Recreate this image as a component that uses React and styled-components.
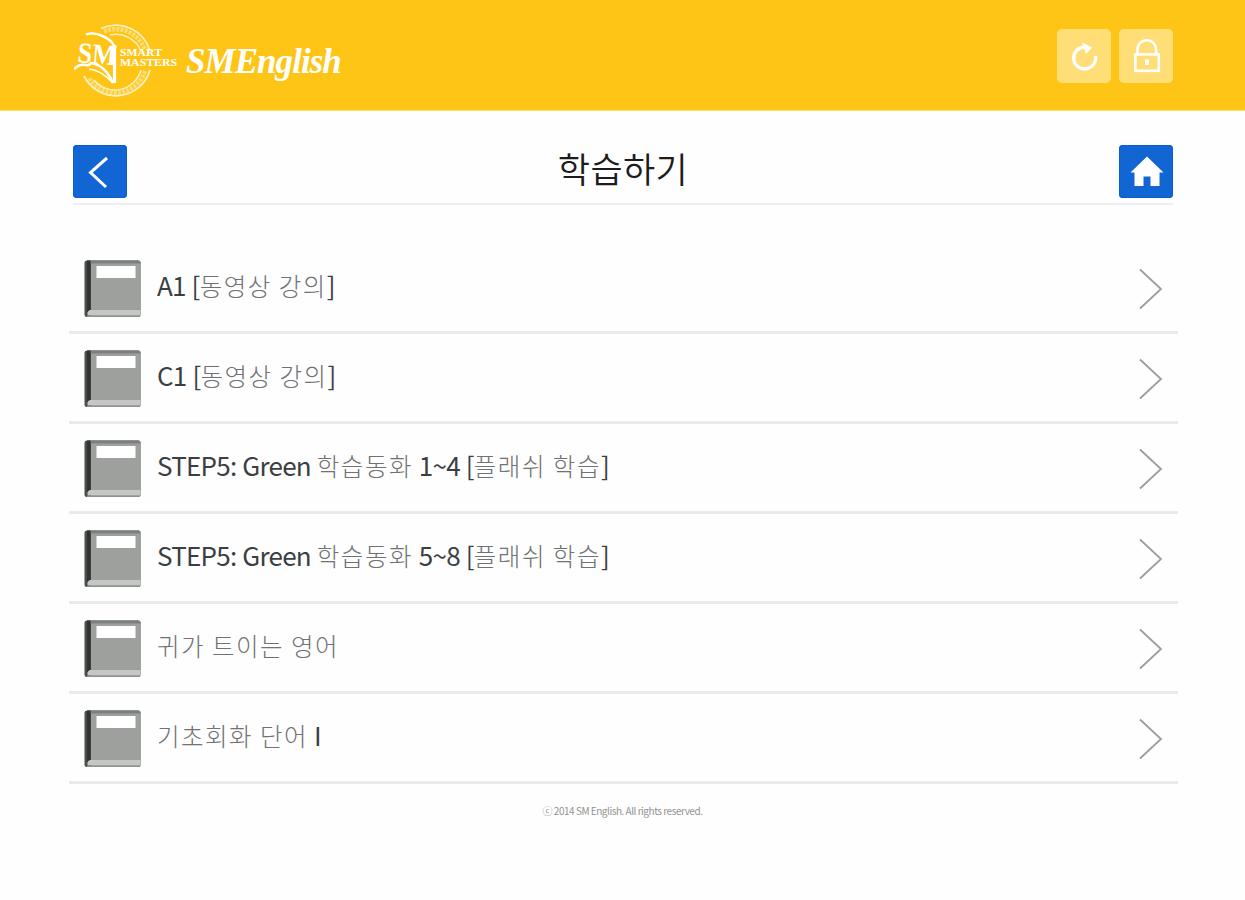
import React from "react";
import styled, { createGlobalStyle } from "styled-components";

const colors = {
  header: "#ffc516",
  headerButton: "#ffde78",
  blue: "#1266d4",
  blueEdge: "#0f5bcb",
  line: "#e9ebe9",
  text: "#3c3f42",
  hangul: "#6f7173",
};

const lessons = [
  "A1 [동영상 강의]",
  "C1 [동영상 강의]",
  "STEP5: Green 학습동화 1~4 [플래쉬 학습]",
  "STEP5: Green 학습동화 5~8 [플래쉬 학습]",
  "귀가 트이는 영어",
  "기초회화 단어 I",
];

// Korean words are set lighter than the latin text around them
const hangulWords = /([가-힣]+(?: [가-힣]+)*)/;

const App = () => {
  return (
    <Wrapper>
      <GlobalStyle />
      <Header>
        <Brand>
          <Emblem />
          <BrandName>SMEnglish</BrandName>
        </Brand>
        <Actions>
          <HeaderButton aria-label="새로고침">
            <RefreshIcon />
          </HeaderButton>
          <HeaderButton aria-label="로그인">
            <LockIcon />
          </HeaderButton>
        </Actions>
      </Header>

      <TitleBar>
        <NavButton aria-label="뒤로">
          <BackIcon />
        </NavButton>
        <Title>학습하기</Title>
        <NavButton aria-label="홈">
          <HomeIcon />
        </NavButton>
      </TitleBar>

      <List>
        {lessons.map((lesson) => (
          <Row key={lesson}>
            <BookIcon />
            <Label>
              {lesson.split(hangulWords).map((part, i) => (i % 2 ? <Hangul key={i}>{part}</Hangul> : part))}
            </Label>
            <ArrowIcon />
          </Row>
        ))}
      </List>

      <Footer>ⓒ 2014 SM English. All rights reserved.</Footer>
    </Wrapper>
  );
};

const Emblem = () => (
  <svg width="104" height="76" viewBox="0 0 104 76" fill="none" stroke="#fff">
    <g opacity="0.75">
      <path d="M27 5.500A35.500 35.500 0 0 1 76 28M76 47A35.500 35.500 0 0 1 10 53" strokeWidth="1.800" />
      <path d="M36 12A27 27 0 0 1 67 28M67 47A27 27 0 0 1 20 57" strokeWidth="1.500" />
      <path d="M30 8.500A31 31 0 0 1 71 27M71 48A31 31 0 0 1 15 55" strokeWidth="4.500" strokeDasharray="3 1.200" opacity="0.55" />
    </g>
    <path d="M12 11.500q7-2.500 14 .5q11 4 14 11" strokeWidth="2.400" />
    <path d="M40.500 22v38" strokeWidth="3.200" />
    <path d="M0 46.500q5-6 12-4.500q3 1 5-2q14 2 22 20" strokeWidth="2.600" />
    <path d="M15 46q12 1 24 14" strokeWidth="1.400" />
    <EmblemText x="3" y="39" fontSize="29" textLength="39" lengthAdjust="spacingAndGlyphs" transform="rotate(5 3 39)">
      SM
    </EmblemText>
    <EmblemText x="46" y="33" fontSize="10" textLength="42" lengthAdjust="spacingAndGlyphs">
      SMART
    </EmblemText>
    <EmblemText x="46" y="43" fontSize="10" textLength="57" lengthAdjust="spacingAndGlyphs">
      MASTERS
    </EmblemText>
  </svg>
);

const RefreshIcon = () => (
  <svg width="54" height="54" viewBox="0 0 54 54" fill="none" stroke="#fff">
    <path d="M27 18A11 11 0 1 0 38.500 27" strokeWidth="3.300" />
    <path d="M25 13.500l10 5L29 25z" fill="#fff" stroke="none" />
  </svg>
);

const LockIcon = () => (
  <svg width="54" height="54" viewBox="0 0 54 54" fill="none" stroke="#fff" strokeWidth="2.600">
    <path d="M18.500 25v-4.500a9.300 9.300 0 0 1 18.600 0V25" />
    <rect x="16.400" y="25.400" width="23.400" height="16.400" />
    <path d="M28 30.500v5.500" strokeWidth="4" />
  </svg>
);

const BackIcon = () => (
  <svg width="54" height="54" viewBox="0 0 54 54" fill="none" stroke="#fff" strokeWidth="3">
    <path d="M34 13L17.500 27.500 33 42" />
  </svg>
);

const HomeIcon = () => (
  <svg width="54" height="54" viewBox="0 0 54 54" fill="#fff">
    <path d="M28 11.500L44.500 27.500H40.500V41H31.500V31.500H24.500V41H15.500V27.500H11.500Z" />
  </svg>
);

const BookIcon = () => (
  <svg width="58" height="58" viewBox="0 0 58 58">
    <rect x="1.500" y="0.500" width="56" height="56.500" rx="2.500" fill="#4b4f4c" />
    <path d="M8 .5h47q2.500 0 2.500 2V54q0 3-2.500 3H8z" fill="#9da09d" />
    <path d="M5 .5h50q2.500 0 2.500 2v1H4z" fill="#7d817e" />
    <path d="M4 .5h3.500v50L4 54z" fill="#303431" />
    <path d="M7 50h50.500v5.500H5q-2-4 2-5.500z" fill="#c5c7c5" />
    <path d="M4 55.500h53.500q0 1.500-2 1.500H4z" fill="#8e918e" />
    <rect x="13.500" y="6" width="39" height="12" fill="#fff" />
  </svg>
);

const ArrowIcon = () => (
  <svg width="26" height="42" viewBox="0 0 26 42" fill="none" stroke="#9b9d9e" strokeWidth="1.800">
    <path d="M2 1.500L23 21 2 40.500" />
  </svg>
);

const GlobalStyle = createGlobalStyle`
  body {
    margin: 0;
    background: #fefefe;
  }
`;

const Wrapper = styled.div`
  min-height: 900px;
  color: ${colors.text};
  font-family: "Noto Sans CJK KR", "Noto Sans", sans-serif;
`;

const Header = styled.header`
  display: flex;
  align-items: flex-start;
  justify-content: space-between;
  box-sizing: border-box;
  height: 111px;
  padding: 23px 72px 0 74px;
  background: ${colors.header};
  border-bottom: 1px solid #ffdc74;
`;

const Brand = styled.div`
  display: flex;
  gap: 8px;
`;

const EmblemText = styled.text`
  fill: #fff;
  stroke: none;
  font-family: "Liberation Serif", serif;
  font-weight: bold;
`;

const BrandName = styled.div`
  padding-top: 19px;
  color: #fff;
  font: italic bold 35px/40px "Liberation Serif", serif;
  letter-spacing: -0.95px;
`;

const Actions = styled.div`
  display: flex;
  gap: 8px;
  padding-top: 6px;
`;

const Button = styled.button`
  display: block;
  width: 54px;
  height: 54px;
  padding: 0;
  border: none;
  cursor: pointer;
`;

const HeaderButton = styled(Button)`
  background: ${colors.headerButton};
  border-radius: 5px;
`;

const NavButton = styled(Button)`
  height: 53px;
  background: ${colors.blue};
  border-radius: 4px;
  box-shadow: inset 0 0 0 1px ${colors.blueEdge};
  overflow: hidden;
`;

const TitleBar = styled.div`
  display: flex;
  justify-content: space-between;
  box-sizing: border-box;
  height: 60px;
  margin: 34px 72px 0 73px;
  border-bottom: 2px solid #eeeff0;
`;

const Title = styled.h1`
  margin: 0;
  color: #1c1c1e;
  font-size: 35px;
  font-weight: 350;
  line-height: 45px;
  letter-spacing: 0.4px;
`;

const List = styled.ul`
  margin: 39px 67px 0 69px;
  padding: 0;
  list-style: none;
`;

const Row = styled.li`
  display: flex;
  align-items: center;
  box-sizing: border-box;
  height: 90px;
  padding: 2px 14px 0 14px;
  border-bottom: 3px solid ${colors.line};
`;

const Label = styled.span`
  flex: 1;
  margin-left: 16px;
  padding-bottom: 6px;
  font-size: 26px;
  line-height: 38px;
  letter-spacing: -0.75px;
  word-spacing: 0.8px;
  white-space: pre;
`;

const Hangul = styled.span`
  color: ${colors.hangul};
  font-size: 24.5px;
  font-weight: 300;
  letter-spacing: 1.5px;
  word-spacing: 0;
`;

const Footer = styled.footer`
  padding-top: 18px;
  color: #929292;
  font-size: 10px;
  line-height: 18px;
  letter-spacing: -0.47px;
  text-align: center;
`;

export default App;
